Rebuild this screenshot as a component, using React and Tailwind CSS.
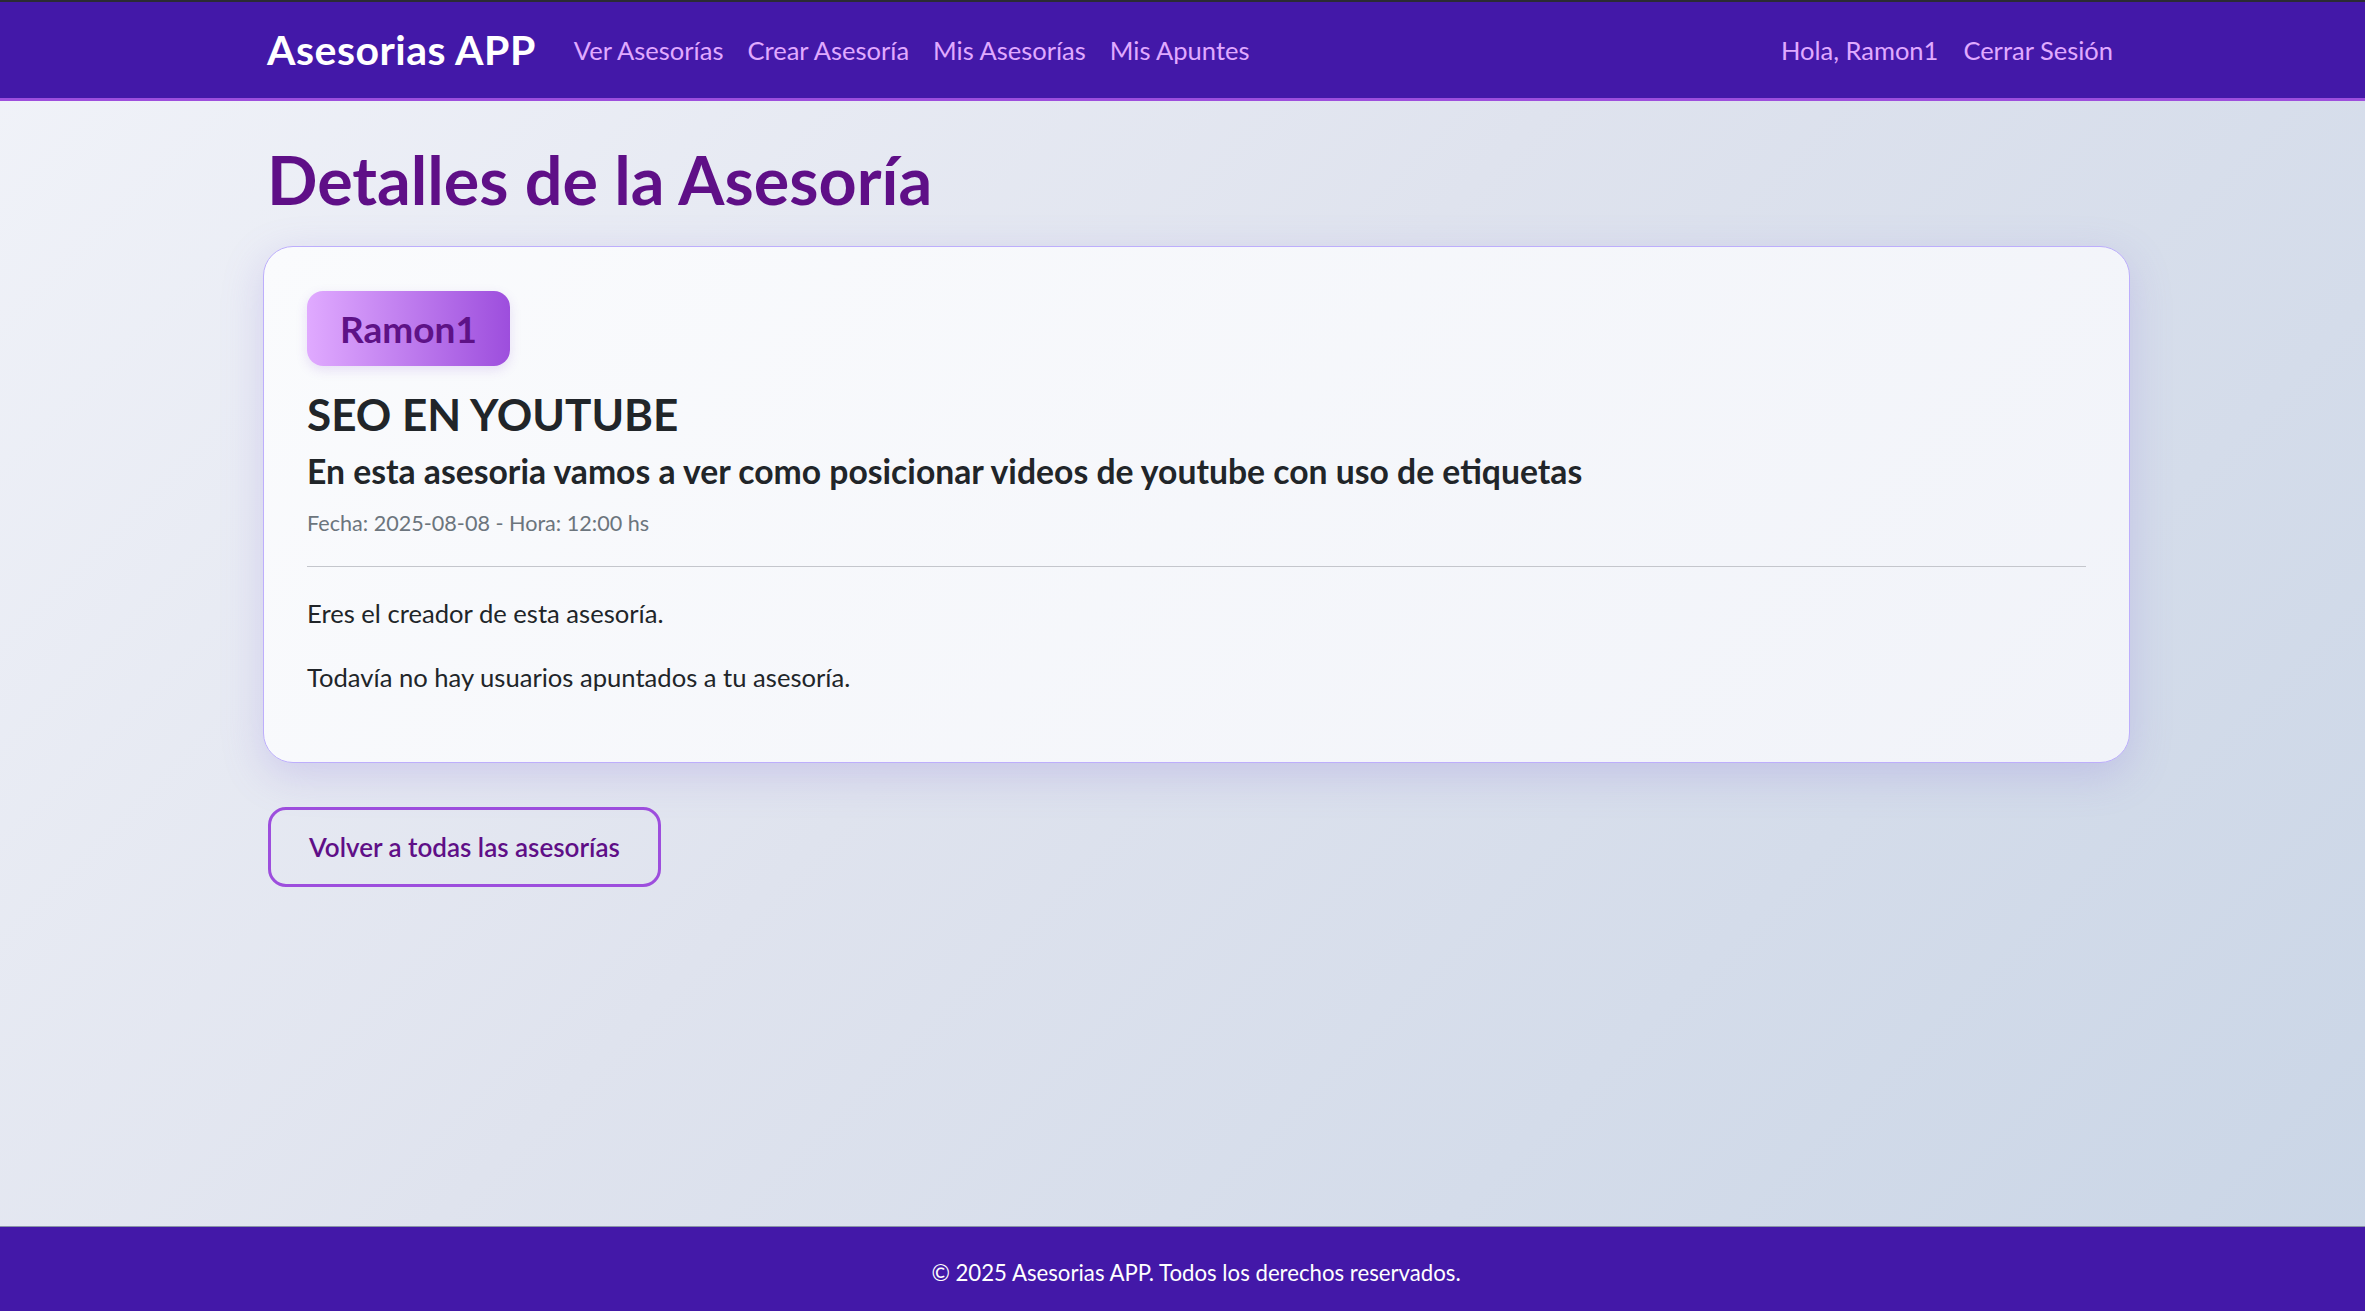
import React from "react";

const navLinks = ["Ver Asesorías", "Crear Asesoría", "Mis Asesorías", "Mis Apuntes"];

export default function App() {
  return (
    <div
      className="flex min-h-screen flex-col bg-[linear-gradient(135deg,#f1f3f9_0%,#dfe3ee_45%,#c9d5e6_100%)] text-[#212529]"
      style={{ fontFamily: "Lato, 'Open Sans', sans-serif" }}
    >
      <nav className="h-[101px] border-t-2 border-b-[3px] border-t-[#2b2b33] border-b-[#9d4edd] bg-[#4318a8]">
        <div className="ml-[267px] flex h-full w-[1863px] items-center">
          <span className="text-[41px] font-bold tracking-[0.5px] text-white">Asesorias APP</span>
          <div className="ml-[38px] flex items-center gap-[24px] text-[25.5px] text-[#e0aaff]">
            {navLinks.map((link) => (
              <span key={link}>{link}</span>
            ))}
          </div>
          <div className="ml-auto mr-[17px] flex items-center gap-[25px] text-[25.5px] text-[#e0aaff]">
            <span>Hola, Ramon1</span>
            <span>Cerrar Sesión</span>
          </div>
        </div>
      </nav>

      <main className="flex-1">
        <div className="ml-[263px] w-[1867px] pt-[39px]">
          <h1 className="ml-[4px] text-[66.5px] leading-[78px] font-bold text-[#5f0f87]">Detalles de la Asesoría</h1>

          <section className="mt-[28px] rounded-[30px] border border-[#bdaefc] bg-[linear-gradient(135deg,#fafbfd,#f1f3f9)] px-[43px] pt-[44px] pb-[45px] shadow-[0_12px_40px_rgba(140,120,220,0.25)]">
            <div className="inline-flex h-[75px] items-center rounded-[16px] bg-[linear-gradient(90deg,#e0aaff,#9d4edd)] px-[33px] shadow-[0_4px_12px_rgba(120,60,200,0.15)]">
              <span className="text-[37px] font-bold text-[#5e1287]">Ramon1</span>
            </div>
            <h2 className="mt-[21px] text-[44px] leading-[54px] font-bold">SEO EN YOUTUBE</h2>
            <h3 className="mt-[12px] text-[33.7px] leading-[36px] font-bold">
              En esta asesoria vamos a ver como posicionar videos de youtube con uso de etiquetas
            </h3>
            <p className="mt-[18px] text-[21.6px] leading-[32px] text-[#6c757d]">Fecha: 2025-08-08 - Hora: 12:00 hs</p>
            <hr className="mt-[27px] border-t-[1.5px] border-[#c4c6cc]" />
            <p className="mt-[28px] text-[25.6px] leading-[36px]">Eres el creador de esta asesoría.</p>
            <p className="mt-[28px] mb-[22px] text-[25.6px] leading-[36px]">Todavía no hay usuarios apuntados a tu asesoría.</p>
          </section>

          <button className="mt-[44px] ml-[5px] h-[80px] rounded-[18px] border-[3px] border-[#9d4edd] px-[38px] text-[26px] font-semibold text-[#5f0f87]">
            Volver a todas las asesorías
          </button>
        </div>
      </main>

      <footer className="flex h-[85px] items-center justify-center border-t border-[#8a93a8] bg-[#4318a8] pt-[8px] pl-[27px] text-[22.2px] text-white">
        © 2025 Asesorias APP. Todos los derechos reservados.
      </footer>
    </div>
  );
}
